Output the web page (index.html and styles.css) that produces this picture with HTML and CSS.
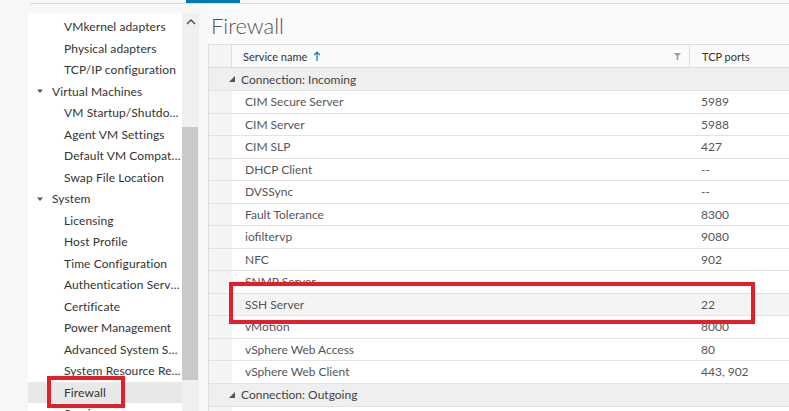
FILE: index.html
```html
<!DOCTYPE html>
<html>
<head>
<meta charset="utf-8">
<link rel="stylesheet" href="styles.css">
</head>
<body>
<div class="page">
  <div class="topline"><div class="tab-active"></div></div>
  <div class="layout">
    <div class="gutter"></div>
    <nav class="sidebar">
      <div class="nav-item child">VMkernel adapters</div>
      <div class="nav-item child">Physical adapters</div>
      <div class="nav-item child">TCP/IP configuration</div>
      <div class="nav-item parent"><svg class="caret" width="8" height="6" viewBox="0 0 8 6"><path d="M1 1.5h6L4 5z" fill="#555"/></svg>Virtual Machines</div>
      <div class="nav-item child">VM Startup/Shutdown</div>
      <div class="nav-item child">Agent VM Settings</div>
      <div class="nav-item child">Default VM Compatibility</div>
      <div class="nav-item child">Swap File Location</div>
      <div class="nav-item parent"><svg class="caret" width="8" height="6" viewBox="0 0 8 6"><path d="M1 1.5h6L4 5z" fill="#555"/></svg>System</div>
      <div class="nav-item child">Licensing</div>
      <div class="nav-item child">Host Profile</div>
      <div class="nav-item child">Time Configuration</div>
      <div class="nav-item child">Authentication Services</div>
      <div class="nav-item child">Certificate</div>
      <div class="nav-item child">Power Management</div>
      <div class="nav-item child">Advanced System Settings</div>
      <div class="nav-item child">System Resource Reservation</div>
      <div class="nav-item child selected">Firewall</div>
      <div class="nav-item child">Services</div>
    </nav>
    <div class="scrollbar">
      <div class="sb-up"><svg width="10" height="6" viewBox="0 0 10 6"><path d="M1 5l4-4 4 4" stroke="#555" stroke-width="1.5" fill="none"/></svg></div>
      <div class="sb-thumb"></div>
    </div>
    <main class="main">
      <h1 class="title">Firewall</h1>
      <div class="grid">
        <div class="row head">
          <div class="sel"></div>
          <div class="cell name-h"><span>Service name</span><svg class="sort" width="8" height="10" viewBox="0 0 8 10"><path d="M4 1.2V10M1 4.2l3-3 3 3" stroke="#0079b8" stroke-width="1.2" fill="none"/></svg><svg class="filter" width="7" height="7" viewBox="0 0 7 7"><path d="M0 0h7L4.3 3.2V7H2.7V3.2z" fill="#a0a0a0"/></svg></div>
          <div class="cell port-h">TCP ports</div>
        </div>
        <div class="row group"><svg class="gtri" width="6" height="6" viewBox="0 0 6 6"><path d="M6 0V6H0z" fill="#555"/></svg>Connection: Incoming</div>
        <div class="row data"><div class="sel"></div><div class="cell name">CIM Secure Server</div><div class="cell port">5989</div></div>
        <div class="row data"><div class="sel"></div><div class="cell name">CIM Server</div><div class="cell port">5988</div></div>
        <div class="row data"><div class="sel"></div><div class="cell name">CIM SLP</div><div class="cell port">427</div></div>
        <div class="row data"><div class="sel"></div><div class="cell name">DHCP Client</div><div class="cell port">--</div></div>
        <div class="row data"><div class="sel"></div><div class="cell name">DVSSync</div><div class="cell port">--</div></div>
        <div class="row data"><div class="sel"></div><div class="cell name">Fault Tolerance</div><div class="cell port">8300</div></div>
        <div class="row data"><div class="sel"></div><div class="cell name">iofiltervp</div><div class="cell port">9080</div></div>
        <div class="row data"><div class="sel"></div><div class="cell name">NFC</div><div class="cell port">902</div></div>
        <div class="row data"><div class="sel"></div><div class="cell name">SNMP Server</div><div class="cell port"></div></div>
        <div class="row data active"><div class="sel"></div><div class="cell name">SSH Server</div><div class="cell port">22</div></div>
        <div class="row data"><div class="sel"></div><div class="cell name">vMotion</div><div class="cell port">8000</div></div>
        <div class="row data"><div class="sel"></div><div class="cell name">vSphere Web Access</div><div class="cell port">80</div></div>
        <div class="row data"><div class="sel"></div><div class="cell name">vSphere Web Client</div><div class="cell port">443, 902</div></div>
        <div class="row group"><svg class="gtri" width="6" height="6" viewBox="0 0 6 6"><path d="M6 0V6H0z" fill="#555"/></svg>Connection: Outgoing</div>
        <div class="row data"><div class="sel"></div><div class="cell name">DHCP Client</div><div class="cell port">68</div></div>
      </div>
    </main>
  </div>
  <div class="mark mark-nav"></div>
  <div class="mark mark-ssh"></div>
</div>
</body>
</html>
```
FILE: styles.css
```css
* { box-sizing: border-box; }
html, body { margin: 0; padding: 0; }
body {
  background: #f7f7f7;
  font-family: "Lato", "Open Sans", "Liberation Sans", sans-serif;
  color: #333;
  width: 789px;
  height: 411px;
  overflow: hidden;
}
.page { position: relative; width: 789px; height: 411px; overflow: hidden; }

.topline {
  height: 4px;
  margin-left: 30px;
  border-bottom: 1px solid #dcdcdc;
}
.tab-active {
  margin-left: 156px;
  width: 54px;
  height: 3px;
  background: #0079b8;
}

.layout {
  display: flex;
  height: 407px;
}
.gutter { width: 28px; flex: none; }

.sidebar {
  width: 154px;
  flex: none;
  margin-top: 9px;
  background: #fff;
  padding-top: 3px;
  overflow: hidden;
}
.nav-item {
  height: 21.5px;
  line-height: 21.5px;
  font-size: 12px;
  letter-spacing: 0.1px;
  color: #333;
  white-space: nowrap;
  overflow: hidden;
  text-overflow: ellipsis;
  padding-right: 0;
}
.nav-item.child { padding-left: 36px; }
.nav-item.parent { padding-left: 8px; display: flex; align-items: center; }
.caret { margin-right: 8px; flex: none; }
.nav-item.selected { background: #e8e8e8; }

.scrollbar {
  width: 17px;
  flex: none;
  margin-top: 9px;
  background: #f0f0f0;
}
.sb-up {
  height: 17px;
  display: flex;
  justify-content: center;
  align-items: center;
  padding-left: 1px;
}
.sb-thumb {
  margin-top: 97px;
  width: 16px;
  height: 253px;
  background: #c9c9c9;
}

.main {
  flex: 1;
  margin-left: 9px;
  overflow: hidden;
  background: #fafafa;
}
.title {
  margin: 0;
  padding: 8px 0 0 3px;
  height: 40px;
  font-size: 22px;
  line-height: 28px;
  font-weight: 300;
  color: #555;
}

.grid {
  width: 700px;
  border-top: 1px solid #ddd;
  border-left: 1px solid #ddd;
  background: #fff;
}
.row {
  display: grid;
  grid-template-columns: 23px 457px 1fr;
  border-bottom: 1px solid #e2e2e2;
}
.sel { background: #f4f4f4; }
.cell {
  display: flex;
  align-items: center;
  white-space: nowrap;
}

.row.head { height: 23px; background: #fafafa; border-bottom: 1px solid #ddd; }
.row.head .sel { border-right: 1px solid #ddd; background: #f4f4f4; }
.name-h { font-size: 11px; color: #333; padding-left: 11px; }
.sort { margin-left: 6px; }
.filter { margin-left: auto; margin-right: 8px; }
.port-h { font-size: 11px; color: #333; padding-left: 12px; border-left: 1px solid #ddd; }

.row.group {
  display: flex;
  align-items: center;
  height: 23px;
  background: #efefef;
  font-size: 12px;
  color: #444;
  padding-left: 20px;
}
.gtri { margin-right: 6px; }

.row.data { height: 22.5px; }
.row.data .cell { font-size: 12px; color: #565656; }
.row.data .name { padding-left: 13px; }
.row.data .port { padding-left: 12px; }
.row.data.active .cell { background: #f4f4f4; }

.mark {
  position: absolute;
  border: 4px solid #e3202a;
}
.mark-nav { left: 47px; top: 376px; width: 78px; height: 32px; }
.mark-ssh { left: 229px; top: 282px; width: 526px; height: 42px; }
```
